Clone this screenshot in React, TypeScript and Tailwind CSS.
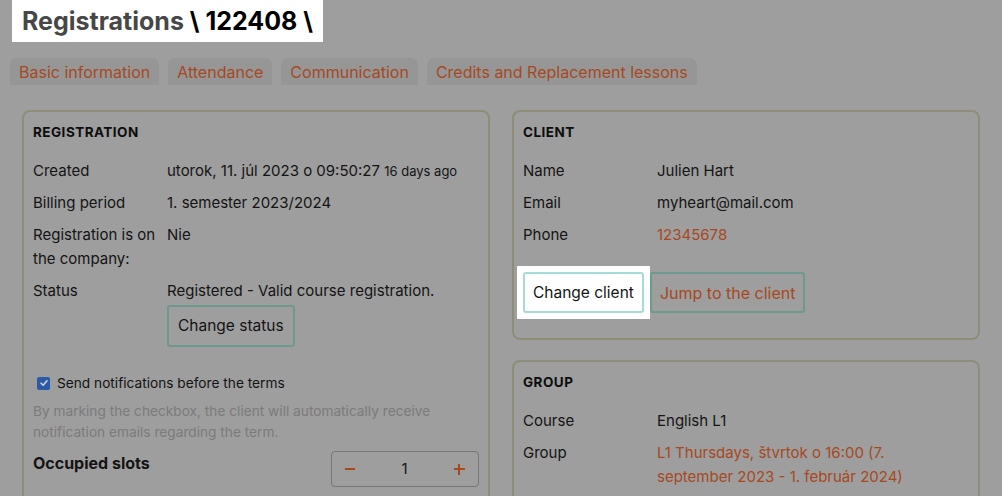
import React from "react";

const orange = "text-[#a6491f]";

function Row({ label, children }: { label: React.ReactNode; children: React.ReactNode }) {
  return (
    <div className="grid grid-cols-[134px_1fr] text-[15px] leading-[24px]">
      <div className="text-[#141414]">{label}</div>
      <div className="text-[#141414]">{children}</div>
    </div>
  );
}

function Card({ title, children, className = "" }: { title: string; children: React.ReactNode; className?: string }) {
  return (
    <div className={`rounded-[8px] border-2 border-[#8e8e78] px-[9px] pt-[11px] ${className}`}>
      <h3 className="text-[13.5px] font-bold leading-[18px] tracking-[0.035em] text-[#0d0d0d]">{title}</h3>
      {children}
    </div>
  );
}

const tabs = ["Basic information", "Attendance", "Communication", "Credits and Replacement lessons"];

export default function App() {
  return (
    <div className="h-[496px] w-full overflow-hidden bg-[#9e9e9e] font-['Inter',sans-serif]">
      {/* page title, highlighted */}
      <div className="ml-[12px] inline-flex h-[42px] items-center bg-white px-[10px] pt-[1px] text-[25px] font-bold">
        <span className="text-[#474747]">Registrations</span>
        <span className="text-black">&nbsp;\ 122408 \</span>
      </div>

      {/* tabs */}
      <div className="ml-[10px] mt-[16px] flex gap-[9px]">
        {tabs.map((t) => (
          <div
            key={t}
            className={`flex h-[27px] items-center rounded-t-[7px] bg-[#969696] px-[9px] text-[16px] ${orange}`}
          >
            {t}
          </div>
        ))}
      </div>

      <div className="mt-[25px] grid grid-cols-2 items-start gap-[22px] px-[22px]">
        {/* left column */}
        <Card title="REGISTRATION" className="pb-[20px]">
          <div className="mt-[18px] flex flex-col gap-[8px]">
            <Row label="Created">
              utorok, 11. júl 2023 o 09:50:27 <span className="text-[13px]">16 days ago</span>
            </Row>
            <Row label="Billing period">1. semester 2023/2024</Row>
            <Row
              label={
                <>
                  Registration is on
                  <br />
                  the company:
                </>
              }
            >
              Nie
            </Row>
            <Row label="Status">
              <div>Registered - Valid course registration.</div>
              <button className="mt-[2px] h-[42px] rounded-[3px] border-2 border-[#6d998f] px-[9px] text-[15.5px] text-[#141414]">
                Change status
              </button>
            </Row>
          </div>

          <label className="mt-[26px] flex h-[20px] items-center gap-[7px] pl-[4px] text-[13.7px] text-[#141414]">
            <span className="flex h-[13px] w-[13px] items-center justify-center rounded-[2px] bg-[#2b5ba8]">
              <svg viewBox="0 0 12 12" className="h-[10px] w-[10px]">
                <path d="M2.5 6.2 L5 8.6 L9.6 3.4" fill="none" stroke="#d8d8d8" strokeWidth="1.8" strokeLinecap="round" strokeLinejoin="round" />
              </svg>
            </span>
            Send notifications before the terms
          </label>
          <p className="mt-[8px] text-[13.7px] leading-[21px] text-[#7b7b7b]">
            By marking the checkbox, the client will automatically receive
            <br />
            notification emails regarding the term.
          </p>

          <div className="mt-[8px] flex items-start justify-between">
            <div className="text-[16px] font-bold leading-[24px] text-[#141414]">Occupied slots</div>
            <div className="flex h-[36px] w-[148px] items-center justify-between rounded-[4px] border border-[#767676] px-[13px] text-[15px]">
              <span className="h-[2px] w-[10px] bg-[#a6491f]" />
              <span className="text-[#141414]">1</span>
              <span className="relative h-[11px] w-[11px]">
                <span className="absolute left-0 top-[4.5px] h-[2px] w-[11px] bg-[#a6491f]" />
                <span className="absolute left-[4.5px] top-0 h-[11px] w-[2px] bg-[#a6491f]" />
              </span>
            </div>
          </div>
        </Card>

        {/* right column */}
        <div className="flex flex-col gap-[20px]">
          <Card title="CLIENT" className="pb-[25px]">
            <div className="mt-[18px] flex flex-col gap-[8px]">
              <Row label="Name">Julien Hart</Row>
              <Row label="Email">myheart@mail.com</Row>
              <Row label="Phone">
                <span className={orange}>12345678</span>
              </Row>
            </div>
            <div className="mt-[25px] flex gap-[6px]">
              <span className="-m-[6px] bg-white p-[6px]">
                <button className="h-[41px] rounded-[3px] border-2 border-[#a6dcd8] px-[8px] text-[15.5px] text-[#141414]">
                  Change client
                </button>
              </span>
              <button className={`h-[41px] rounded-[3px] border-2 border-[#6d998f] px-[8px] text-[16px] ${orange}`}>
                Jump to the client
              </button>
            </div>
          </Card>

          <Card title="GROUP" className="pb-[20px]">
            <div className="mt-[18px] flex flex-col gap-[8px]">
              <Row label="Course">English L1</Row>
              <Row label="Group">
                <span className={orange}>
                  L1 Thursdays, štvrtok o 16:00 (7.
                  <br />
                  september 2023 - 1. február 2024)
                </span>
              </Row>
            </div>
          </Card>
        </div>
      </div>
    </div>
  );
}
